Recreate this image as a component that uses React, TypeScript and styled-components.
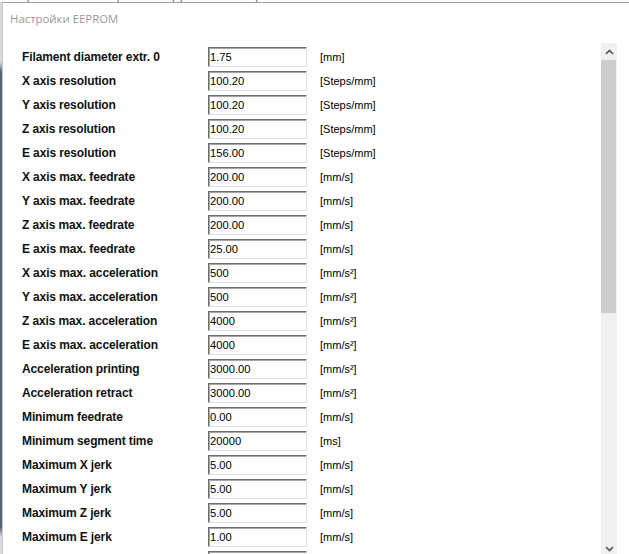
import React from "react";
import styled, { createGlobalStyle } from "styled-components";

const GlobalStyle = createGlobalStyle`
  html, body {
    margin: 0;
    padding: 0;
    width: 629px;
    height: 554px;
    overflow: hidden;
    background: #fff;
  }
`;

type Param = { label: string; value: string; unit: string };

const params: Param[] = [
  { label: "Filament diameter extr. 0", value: "1.75", unit: "[mm]" },
  { label: "X axis resolution", value: "100.20", unit: "[Steps/mm]" },
  { label: "Y axis resolution", value: "100.20", unit: "[Steps/mm]" },
  { label: "Z axis resolution", value: "100.20", unit: "[Steps/mm]" },
  { label: "E axis resolution", value: "156.00", unit: "[Steps/mm]" },
  { label: "X axis max. feedrate", value: "200.00", unit: "[mm/s]" },
  { label: "Y axis max. feedrate", value: "200.00", unit: "[mm/s]" },
  { label: "Z axis max. feedrate", value: "200.00", unit: "[mm/s]" },
  { label: "E axis max. feedrate", value: "25.00", unit: "[mm/s]" },
  { label: "X axis max. acceleration", value: "500", unit: "[mm/s²]" },
  { label: "Y axis max. acceleration", value: "500", unit: "[mm/s²]" },
  { label: "Z axis max. acceleration", value: "4000", unit: "[mm/s²]" },
  { label: "E axis max. acceleration", value: "4000", unit: "[mm/s²]" },
  { label: "Acceleration printing", value: "3000.00", unit: "[mm/s²]" },
  { label: "Acceleration retract", value: "3000.00", unit: "[mm/s²]" },
  { label: "Minimum feedrate", value: "0.00", unit: "[mm/s]" },
  { label: "Minimum segment time", value: "20000", unit: "[ms]" },
  { label: "Maximum X jerk", value: "5.00", unit: "[mm/s]" },
  { label: "Maximum Y jerk", value: "5.00", unit: "[mm/s]" },
  { label: "Maximum Z jerk", value: "5.00", unit: "[mm/s]" },
  { label: "Maximum E jerk", value: "1.00", unit: "[mm/s]" },
  { label: "Home offset X", value: "0.00", unit: "[mm]" },
];

const menuGhost = ["Настройки", "Помощь", "Инструменты", "Справка"];

const Screen = styled.div`
  display: flex;
  flex-direction: column;
  width: 629px;
  height: 554px;
`;

// fragments of the app menu peeking out behind the dialog
const BehindStrip = styled.div`
  height: 2px;
  overflow: hidden;
  display: flex;
  gap: 20px;
  background: #fff;
`;

const GhostItem = styled.span`
  font-family: "Liberation Sans", Arial, sans-serif;
  font-size: 12px;
  line-height: 12px;
  color: #6a6a6a;
  margin-top: -10px;
`;

const Body = styled.div`
  flex: 1;
  display: flex;
  min-height: 0;
`;

const LeftEdge = styled.div`
  width: 2px;
  background: linear-gradient(
    to bottom,
    #d8d8d8 0px,
    #d8d8d8 60px,
    #55627a 70px,
    #55627a 525px,
    #dcdcdc 535px
  );
`;

const Dialog = styled.div`
  flex: 1;
  display: flex;
  flex-direction: column;
  min-height: 0;
  border-top: 1px solid #a0a0a0;
  border-left: 1px solid #c8c8c8;
  background: #fff;
`;

const TitleBar = styled.div`
  height: 30px;
  display: flex;
  align-items: center;
  padding-left: 7px;
  font-family: "Open Sans", "Noto Sans", sans-serif;
  font-size: 11.4px;
  color: #999;
`;

const ContentRow = styled.div`
  flex: 1;
  display: flex;
  min-height: 0;
  padding-top: 10px;
`;

const ParamList = styled.div`
  flex: 1;
  display: flex;
  flex-direction: column;
  padding: 2px 0 0 19px;
  overflow: hidden;
`;

const Row = styled.div`
  display: grid;
  grid-template-columns: 186px 99px auto;
  align-items: center;
  height: 24px;
  flex-shrink: 0;
`;

const Label = styled.span`
  font-family: "Liberation Sans", Arial, sans-serif;
  font-weight: bold;
  font-size: 12px;
  letter-spacing: -0.12px;
  color: #111;
  white-space: nowrap;
`;

const ValueBox = styled.div`
  box-sizing: border-box;
  height: 20px;
  margin-top: -1px;
  padding: 2px 0 0 1px;
  border-top: 1px solid #6e6e6e;
  border-left: 1px solid #6e6e6e;
  border-bottom: 1px solid #e3e3e3;
  border-right: 1px solid #e3e3e3;
  box-shadow: inset 1px 1px 0 #a6a6a6;
  font-family: "Liberation Sans", Arial, sans-serif;
  font-size: 11.2px;
  line-height: 14px;
  color: #000;
  background: #fff;
`;

const Unit = styled.span`
  padding-left: 13px;
  font-family: "Liberation Sans", Arial, sans-serif;
  font-size: 11px;
  color: #000;
`;

const ScrollTrack = styled.div`
  width: 16px;
  margin-right: 12px;
  height: 514px;
  display: flex;
  flex-direction: column;
  background: #f0f0f0;
  flex-shrink: 0;
`;

const ArrowButton = styled.div`
  height: 17px;
  display: flex;
  align-items: center;
  justify-content: center;
  flex-shrink: 0;
`;

const Thumb = styled.div`
  height: 253px;
  margin-right: 1px;
  background: #cdcdcd;
  flex-shrink: 0;
`;

const Spacer = styled.div`
  flex: 1;
`;

const Chevron = ({ down }: { down?: boolean }) => (
  <svg width="9" height="6" viewBox="0 0 9 6">
    <path
      d={down ? "M1 1.2 L4.5 4.5 L8 1.2" : "M1 4.8 L4.5 1.5 L8 4.8"}
      fill="none"
      stroke="#606060"
      strokeWidth="1.8"
    />
  </svg>
);

const App = () => {
  return (
    <Screen>
      <GlobalStyle />
      <BehindStrip>
        {menuGhost.map((m) => (
          <GhostItem key={m}>{m}</GhostItem>
        ))}
      </BehindStrip>
      <Body>
        <LeftEdge />
        <Dialog>
          <TitleBar>Настройки EEPROM</TitleBar>
          <ContentRow>
            <ParamList>
              {params.map((p) => (
                <Row key={p.label}>
                  <Label>{p.label}</Label>
                  <ValueBox>{p.value}</ValueBox>
                  <Unit>{p.unit}</Unit>
                </Row>
              ))}
            </ParamList>
            <ScrollTrack>
              <ArrowButton>
                <Chevron />
              </ArrowButton>
              <Thumb />
              <Spacer />
              <ArrowButton>
                <Chevron down />
              </ArrowButton>
            </ScrollTrack>
          </ContentRow>
        </Dialog>
      </Body>
    </Screen>
  );
};

export default App;
